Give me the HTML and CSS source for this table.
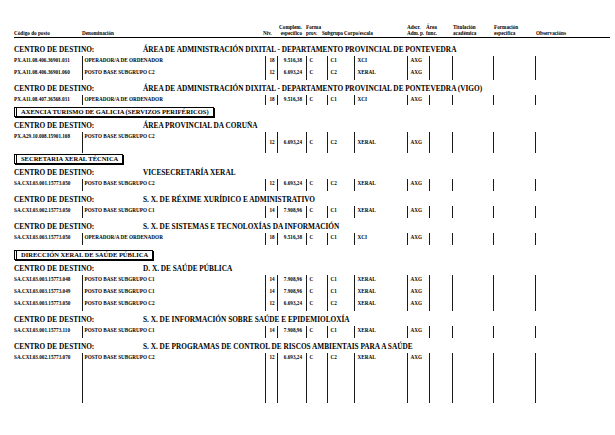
FILE: index.html
```html
<!DOCTYPE html>
<html lang="gl">
<head>
<meta charset="utf-8">
<title>Relación de postos</title>
<link rel="stylesheet" href="styles.css">
</head>
<body>
<div class="page">
  <div class="head">
    <div class="h h-cod">Código do posto</div>
    <div class="h h-den">Denominación</div>
    <div class="h h-niv">Niv.</div>
    <div class="h h-cmp"><span>Complem.</span><span>específico</span></div>
    <div class="h h-frm"><span>Forma</span><span>prov.</span></div>
    <div class="h h-sub">Subgrupo</div>
    <div class="h h-cor">Corpo/escala</div>
    <div class="h h-ads"><span>Adscr.</span><span>Adm. p.</span></div>
    <div class="h h-are"><span>Área</span><span>func.</span></div>
    <div class="h h-tit"><span>Titulación</span><span>académica</span></div>
    <div class="h h-fmc"><span>Formación</span><span>específica</span></div>
    <div class="h h-obs">Observacións</div>
  </div>

  <section class="grp first">
    <div class="centro"><span class="lbl">CENTRO DE DESTINO:</span><span class="ttl">ÁREA DE ADMINISTRACIÓN DIXITAL - DEPARTAMENTO PROVINCIAL DE PONTEVEDRA</span></div>
    <div class="row"><span class="c cod">PX.A11.08.406.36901.031</span><span class="c den">OPERADOR/A DE ORDENADOR</span><span class="c niv">18</span><span class="c cmp">9.516,38</span><span class="c frm">C</span><span class="c sub">C1</span><span class="c cor">XCI</span><span class="c ads">AXG</span><span class="c are"></span><span class="c tit"></span><span class="c fmc"></span><span class="c obs"></span></div>
    <div class="row"><span class="c cod">PX.A11.08.406.36901.060</span><span class="c den">POSTO BASE SUBGRUPO C2</span><span class="c niv">12</span><span class="c cmp">6.693,24</span><span class="c frm">C</span><span class="c sub">C2</span><span class="c cor">XERAL</span><span class="c ads">AXG</span><span class="c are"></span><span class="c tit"></span><span class="c fmc"></span><span class="c obs"></span></div>
  </section>

  <section class="grp">
    <div class="centro"><span class="lbl">CENTRO DE DESTINO:</span><span class="ttl">ÁREA DE ADMINISTRACIÓN DIXITAL - DEPARTAMENTO PROVINCIAL DE PONTEVEDRA (VIGO)</span></div>
    <div class="row compact"><span class="c cod">PX.A11.08.407.36568.031</span><span class="c den">OPERADOR/A DE ORDENADOR</span><span class="c niv">18</span><span class="c cmp">9.516,38</span><span class="c frm">C</span><span class="c sub">C1</span><span class="c cor">XCI</span><span class="c ads">AXG</span><span class="c are"></span><span class="c tit"></span><span class="c fmc"></span><span class="c obs"></span></div>
  </section>

  <div class="dept tight">AXENCIA TURISMO DE GALICIA (SERVIZOS PERIFÉRICOS)</div>

  <section class="grp">
    <div class="centro"><span class="lbl">CENTRO DE DESTINO:</span><span class="ttl">ÁREA PROVINCIAL DA CORUÑA</span></div>
    <div class="row tall"><span class="c cod">PX.A29.10.008.15901.108</span><span class="c den">POSTO BASE SUBGRUPO C2</span><span class="c niv">12</span><span class="c cmp">6.693,24</span><span class="c frm">C</span><span class="c sub">C2</span><span class="c cor">XERAL</span><span class="c ads">AXG</span><span class="c are"></span><span class="c tit"></span><span class="c fmc"></span><span class="c obs"></span></div>
  </section>

  <div class="dept snug">SECRETARIA XERAL TÉCNICA</div>

  <section class="grp">
    <div class="centro"><span class="lbl">CENTRO DE DESTINO:</span><span class="ttl">VICESECRETARÍA XERAL</span></div>
    <div class="row"><span class="c cod">SA.CXI.03.001.15773.050</span><span class="c den">POSTO BASE SUBGRUPO C2</span><span class="c niv">12</span><span class="c cmp">6.693,24</span><span class="c frm">C</span><span class="c sub">C2</span><span class="c cor">XERAL</span><span class="c ads">AXG</span><span class="c are"></span><span class="c tit"></span><span class="c fmc"></span><span class="c obs"></span></div>
  </section>

  <section class="grp">
    <div class="centro"><span class="lbl">CENTRO DE DESTINO:</span><span class="ttl">S. X. DE RÉXIME XURÍDICO E ADMINISTRATIVO</span></div>
    <div class="row"><span class="c cod">SA.CXI.03.002.15773.050</span><span class="c den">POSTO BASE SUBGRUPO C1</span><span class="c niv">14</span><span class="c cmp">7.908,96</span><span class="c frm">C</span><span class="c sub">C1</span><span class="c cor">XERAL</span><span class="c ads">AXG</span><span class="c are"></span><span class="c tit"></span><span class="c fmc"></span><span class="c obs"></span></div>
  </section>

  <section class="grp">
    <div class="centro"><span class="lbl">CENTRO DE DESTINO:</span><span class="ttl">S. X. DE SISTEMAS E TECNOLOXÍAS DA INFORMACIÓN</span></div>
    <div class="row"><span class="c cod">SA.CXI.03.003.15773.050</span><span class="c den">OPERADOR/A DE ORDENADOR</span><span class="c niv">18</span><span class="c cmp">9.516,38</span><span class="c frm">C</span><span class="c sub">C1</span><span class="c cor">XCI</span><span class="c ads">AXG</span><span class="c are"></span><span class="c tit"></span><span class="c fmc"></span><span class="c obs"></span></div>
  </section>

  <div class="dept">DIRECCIÓN XERAL DE SAÚDE PÚBLICA</div>

  <section class="grp">
    <div class="centro"><span class="lbl">CENTRO DE DESTINO:</span><span class="ttl">D. X. DE SAÚDE PÚBLICA</span></div>
    <div class="row"><span class="c cod">SA.CXI.03.003.15773.048</span><span class="c den">POSTO BASE SUBGRUPO C1</span><span class="c niv">14</span><span class="c cmp">7.908,96</span><span class="c frm">C</span><span class="c sub">C1</span><span class="c cor">XERAL</span><span class="c ads">AXG</span><span class="c are"></span><span class="c tit"></span><span class="c fmc"></span><span class="c obs"></span></div>
    <div class="row"><span class="c cod">SA.CXI.03.003.15773.049</span><span class="c den">POSTO BASE SUBGRUPO C1</span><span class="c niv">14</span><span class="c cmp">7.908,96</span><span class="c frm">C</span><span class="c sub">C1</span><span class="c cor">XERAL</span><span class="c ads">AXG</span><span class="c are"></span><span class="c tit"></span><span class="c fmc"></span><span class="c obs"></span></div>
    <div class="row"><span class="c cod">SA.CXI.03.003.15773.050</span><span class="c den">POSTO BASE SUBGRUPO C2</span><span class="c niv">12</span><span class="c cmp">6.693,24</span><span class="c frm">C</span><span class="c sub">C2</span><span class="c cor">XERAL</span><span class="c ads">AXG</span><span class="c are"></span><span class="c tit"></span><span class="c fmc"></span><span class="c obs"></span></div>
  </section>

  <section class="grp">
    <div class="centro"><span class="lbl">CENTRO DE DESTINO:</span><span class="ttl">S. X. DE INFORMACIÓN SOBRE SAÚDE E EPIDEMIOLOXÍA</span></div>
    <div class="row"><span class="c cod">SA.CXI.03.001.15773.110</span><span class="c den">POSTO BASE SUBGRUPO C1</span><span class="c niv">14</span><span class="c cmp">7.908,96</span><span class="c frm">C</span><span class="c sub">C1</span><span class="c cor">XERAL</span><span class="c ads">AXG</span><span class="c are"></span><span class="c tit"></span><span class="c fmc"></span><span class="c obs"></span></div>
  </section>

  <section class="grp">
    <div class="centro"><span class="lbl">CENTRO DE DESTINO:</span><span class="ttl">S. X. DE PROGRAMAS DE CONTROL DE RISCOS AMBIENTAIS PARA A SAÚDE</span></div>
    <div class="row last"><span class="c cod">SA.CXI.03.002.15773.070</span><span class="c den">POSTO BASE SUBGRUPO C2</span><span class="c niv">12</span><span class="c cmp">6.693,24</span><span class="c frm">C</span><span class="c sub">C2</span><span class="c cor">XERAL</span><span class="c ads">AXG</span><span class="c are"></span><span class="c tit"></span><span class="c fmc"></span><span class="c obs"></span></div>
  </section>
</div>
</body>
</html>
```

FILE: styles.css
```css
html, body {
  margin: 0;
  padding: 0;
  background: #ffffff;
}

body {
  font-family: "Liberation Serif", "Times New Roman", serif;
  font-weight: bold;
  color: #000000;
}

.page {
  width: 615px;
  height: 435px;
  box-sizing: border-box;
  padding: 0 5px 0 14px;
  overflow: hidden;
}

/* header */
.head {
  display: flex;
  align-items: flex-end;
  padding-top: 25px;
  padding-bottom: 1px;
  border-bottom: 1px solid #000;
  font-size: 5.2px;
  line-height: 5.5px;
  white-space: nowrap;
}

.h {
  flex: none;
  display: flex;
  flex-direction: column;
}

.h-cod { width: 68px; }
.h-den { width: 181px; }
.h-niv { width: 11px; }
.h-cmp { width: 28px; align-items: flex-end; margin-right: 4px; }
.h-frm { width: 16px; }
.h-sub { width: 22px; letter-spacing: -0.1px; }
.h-cor { width: 63px; }
.h-ads { width: 19px; letter-spacing: -0.1px; }
.h-are { width: 27px; }
.h-tit { width: 41px; }
.h-fmc { width: 42px; }
.h-obs { flex: 1; }

/* groups */
.grp {
  padding-top: 4px;
}

.grp.first {
  margin-top: 2.5px;
}

.centro {
  display: flex;
  font-size: 7.3px;
  line-height: 9px;
  height: 9px;
  margin-bottom: 2px;
  white-space: nowrap;
}

.centro .lbl {
  width: 129px;
  flex: none;
}

/* data rows */
.row {
  display: flex;
  height: 12px;
  font-size: 5.2px;
  line-height: 6px;
  white-space: nowrap;
}

.c {
  flex: none;
  box-sizing: border-box;
  border-left: 1px solid #1a1a1a;
  padding-top: 1.5px;
  padding-left: 2.5px;
  overflow: hidden;
}

.cod { width: 68px; border-left: none; padding-left: 0; }
.den { width: 183px; padding-left: 1.5px; }
.niv { width: 12px; padding-left: 3.5px; }
.cmp { width: 29px; text-align: right; padding-right: 4px; }
.frm { width: 21px; }
.sub { width: 27px; }
.cor { width: 53px; }
.ads { width: 22px; }
.are { width: 23px; }
.tit { width: 41px; }
.fmc { width: 42px; }
.obs { width: 1px; padding: 0; }

.row.compact {
  height: 10px;
}

.row.tall {
  height: 21px;
}

.row.tall .niv,
.row.tall .cmp,
.row.tall .frm,
.row.tall .sub,
.row.tall .cor,
.row.tall .ads {
  padding-top: 7px;
}

.row.last {
  height: 50px;
}

/* department boxes */
.dept {
  width: max-content;
  margin-top: 5px;
  box-sizing: border-box;
  height: 10px;
  padding: 0 4px 0 4px;
  border: 1px solid #000;
  border-left: 3px double #000;
  box-shadow: 1px 1px 0 #000;
  font-size: 6.5px;
  line-height: 8px;
  white-space: nowrap;
}

.dept.tight {
  margin-top: 2px;
}

.dept.snug {
  margin-top: 1px;
}
```
